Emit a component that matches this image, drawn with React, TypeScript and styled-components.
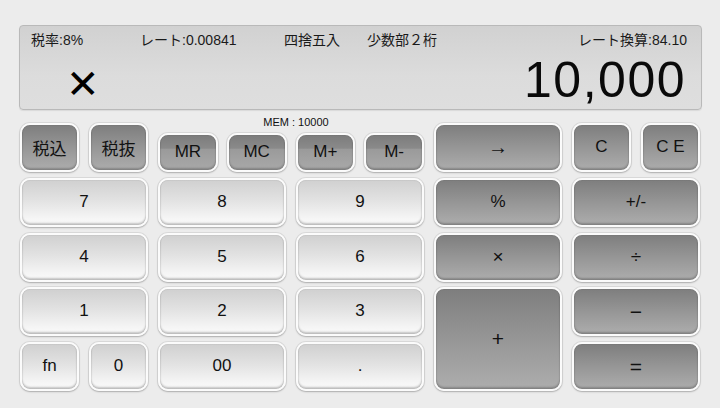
import React from "react";
import styled, { createGlobalStyle, css } from "styled-components";

const Global = createGlobalStyle`
  html, body { margin: 0; padding: 0; background: #ececec; }
  body { font-family: "Liberation Sans", "Noto Sans CJK JP", sans-serif; }
  * { box-sizing: border-box; }
`;

const Page = styled.div`
  width: 720px;
  height: 408px;
  padding: 25px 18px 0 19px;
  background: #ececec;
  overflow: hidden;
`;

const Display = styled.div`
  height: 85px;
  border: 1px solid #b9b9b9;
  border-radius: 4px;
  background: linear-gradient(#d1d1d1, #dcdcdc 60%, #dedede);
  box-shadow: 0 1px 1px rgba(0, 0, 0, 0.08);
  display: flex;
  flex-direction: column;
  padding: 0 14px 0 11px;
`;

const InfoRow = styled.div`
  display: flex;
  align-items: center;
  height: 26px;
  padding-top: 1px;
  font-size: 14px;
  color: #1a1a1a;
  white-space: nowrap;
`;

const Info = styled.span<{ $w: number }>`
  width: ${(p) => p.$w}px;
`;

const InfoRight = styled.span`
  margin-left: auto;
`;

const ValueRow = styled.div`
  flex: 1;
  display: flex;
  align-items: center;
  justify-content: space-between;
  padding-bottom: 4px;
`;

const Op = styled.span`
  font-family: "DejaVu Sans", sans-serif;
  font-weight: bold;
  font-size: 40px;
  line-height: 40px;
  color: #000;
  margin-left: 35px;
  margin-top: 12px;
`;

const Value = styled.span`
  font-size: 50px;
  line-height: 50px;
  color: #0a0a0a;
  letter-spacing: 1.5px;
  margin-top: 4px;
  margin-right: 1px;
`;

const Keypad = styled.div`
  margin: 13px 0 0 1px;
  width: 680px;
  display: grid;
  grid-template-columns: repeat(5, 128px);
  grid-template-rows: repeat(5, 49px);
  column-gap: 10px;
  row-gap: 5.75px;
`;

const Pair = styled.div`
  display: grid;
  grid-template-columns: 1fr 1fr;
  column-gap: 10px;
`;

const MemArea = styled.div`
  grid-column: span 2;
  display: flex;
  flex-direction: column;
`;

const MemLabel = styled.div`
  height: 15px;
  margin-top: -8px;
  line-height: 15px;
  font-size: 11px;
  color: #111;
  text-align: center;
  padding-left: 10px;
`;

const MemKeys = styled.div`
  flex: 1;
  margin-top: 3px;
  display: grid;
  grid-template-columns: repeat(4, 1fr);
  column-gap: 9px;
`;

type Tone = "light" | "dark" | "mem";

const faces: Record<Tone, ReturnType<typeof css>> = {
  light: css`
    background: linear-gradient(#d0d0d0 0%, #e2e2e2 45%, #f5f5f5 85%, #fafafa 100%);
  `,
  dark: css`
    background: linear-gradient(#7e7e7e 0%, #969696 50%, #adadad 100%);
  `,
  mem: css`
    background: linear-gradient(#7c7c7c 0%, #8a8a8a 38%, #9a9a9a 40%, #a3a3a3 75%, #a8a8a8 100%);
  `,
};

const Key = styled.button<{ $tone: Tone; $rows?: number }>`
  ${(p) => (p.$rows ? css`grid-row: span ${p.$rows};` : css``)}
  margin: 0;
  padding: 0 0 1px;
  width: 100%;
  height: 100%;
  border: 2px solid #fbfbfb;
  border-radius: 10px;
  font-family: "Liberation Sans", "Noto Sans CJK JP", sans-serif;
  font-size: 17px;
  color: #111;
  display: flex;
  align-items: center;
  justify-content: center;
  box-shadow: 0 0 0 1px rgba(0, 0, 0, 0.07), 0 1px 2px rgba(0, 0, 0, 0.22),
    inset 0 -2px 2px rgba(0, 0, 0, 0.22), inset 0 0 1px rgba(0, 0, 0, 0.35);
  ${(p) => faces[p.$tone]}
`;

const Sign = styled.span<{ $size: number }>`
  font-family: "Liberation Sans", sans-serif;
  font-size: ${(p) => p.$size}px;
  line-height: 1;
`;

export default function App() {
  return (
    <>
      <Global />
      <Page>
        <Display>
          <InfoRow>
            <Info $w={109}>税率:8%</Info>
            <Info $w={144}>レート:0.00841</Info>
            <Info $w={83}>四捨五入</Info>
            <Info $w={120}>少数部２桁</Info>
            <InfoRight>レート換算:84.10</InfoRight>
          </InfoRow>
          <ValueRow>
            <Op>✕</Op>
            <Value>10,000</Value>
          </ValueRow>
        </Display>
        <Keypad>
          <Pair>
            <Key $tone="dark">税込</Key>
            <Key $tone="dark">税抜</Key>
          </Pair>
          <MemArea>
            <MemLabel>MEM : 10000</MemLabel>
            <MemKeys>
              <Key $tone="mem">MR</Key>
              <Key $tone="mem">MC</Key>
              <Key $tone="mem">M+</Key>
              <Key $tone="mem">M-</Key>
            </MemKeys>
          </MemArea>
          <Key $tone="dark">
            <Sign $size={20}>→</Sign>
          </Key>
          <Pair>
            <Key $tone="dark">C</Key>
            <Key $tone="dark">C E</Key>
          </Pair>

          <Key $tone="light">7</Key>
          <Key $tone="light">8</Key>
          <Key $tone="light">9</Key>
          <Key $tone="dark">%</Key>
          <Key $tone="dark">+/-</Key>

          <Key $tone="light">4</Key>
          <Key $tone="light">5</Key>
          <Key $tone="light">6</Key>
          <Key $tone="dark">
            <Sign $size={19}>×</Sign>
          </Key>
          <Key $tone="dark">
            <Sign $size={19}>÷</Sign>
          </Key>

          <Key $tone="light">1</Key>
          <Key $tone="light">2</Key>
          <Key $tone="light">3</Key>
          <Key $tone="dark" $rows={2}>
            <Sign $size={21}>+</Sign>
          </Key>
          <Key $tone="dark">
            <Sign $size={21}>−</Sign>
          </Key>

          <Pair>
            <Key $tone="light">fn</Key>
            <Key $tone="light">0</Key>
          </Pair>
          <Key $tone="light">00</Key>
          <Key $tone="light">.</Key>
          <Key $tone="dark">
            <Sign $size={21}>=</Sign>
          </Key>
        </Keypad>
      </Page>
    </>
  );
}
